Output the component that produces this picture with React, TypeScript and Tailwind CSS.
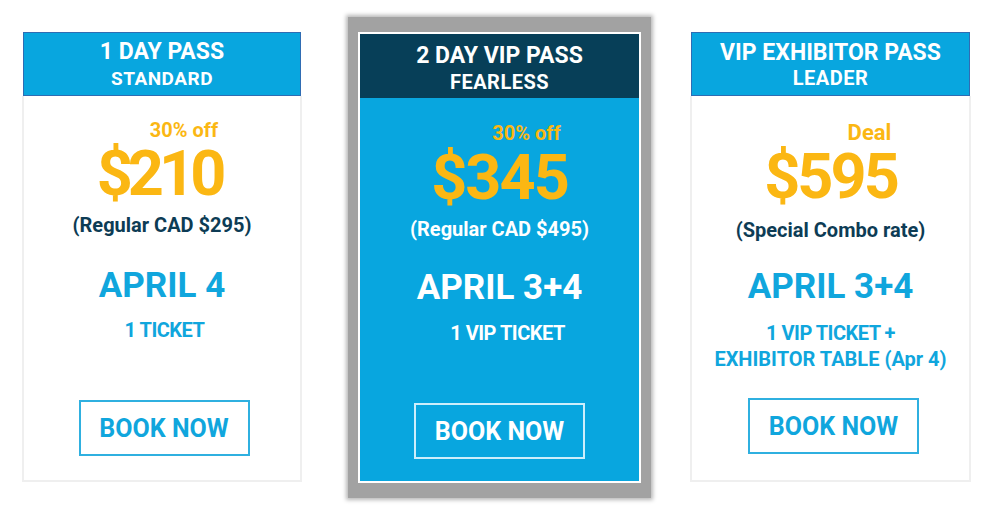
import React from "react";

export default function App() {
  return (
    <div className="w-[1000px] h-[515px] bg-white flex items-start font-['Roboto',sans-serif] font-bold leading-none overflow-hidden">
      {/* Card 1 */}
      <div className="ml-[22px] mt-[32px] w-[280px] flex flex-col">
        <div className="mx-[1px] h-[64px] bg-[#08a6df] border border-[#2f6cb3] flex flex-col items-center justify-center gap-[6px] text-white">
          <div className="text-[23px]">1 DAY PASS</div>
          <div className="text-[19px] tracking-[0.5px]">STANDARD</div>
        </div>
        <div className="h-[386px] border-2 border-t-0 border-[#efefef] flex flex-col items-center">
          <div className="mt-[24px] ml-[44px] text-[20px] text-[#fbb713]">30% off</div>
          <div className="mt-[2px] mr-[6px] text-[63px] text-[#fbb713] tracking-[-5px]">$210</div>
          <div className="mt-[10px] text-[20px] text-[#0d3c55]">(Regular CAD $295)</div>
          <div className="mt-[33px] text-[35px] text-[#10a6dd]">APRIL 4</div>
          <div className="mt-[17px] ml-[5px] text-[20px] tracking-[-0.5px] text-[#10a6dd]">1 TICKET</div>
          <div className="mt-[60px] ml-[4px] w-[171px] h-[56px] border-2 border-[#2fb0e0] flex items-center justify-center text-[25px] text-[#10a6dd]">
            BOOK NOW
          </div>
        </div>
      </div>

      {/* Card 2 (featured) */}
      <div className="ml-[46px] mt-[17px] w-[303px] px-[10px] py-[15px] bg-[#a2a2a2] shadow-[0_0_4px_2px_#b8b8b8]">
        <div className="border-2 border-white flex flex-col">
          <div className="h-[64px] bg-[#073f58] flex flex-col items-center justify-center gap-[5px] text-white pt-[4px]">
            <div className="text-[23px]">2 DAY VIP PASS</div>
            <div className="text-[20px] tracking-[0.5px]">FEARLESS</div>
          </div>
          <div className="h-[383px] bg-[#08a6df] flex flex-col items-center">
            <div className="mt-[25px] ml-[54px] text-[20px] text-[#fbb713]">30% off</div>
            <div className="mt-[3px] text-[63px] text-[#fbb713] tracking-[-2px]">$345</div>
            <div className="mt-[10px] text-[20px] text-white">(Regular CAD $495)</div>
            <div className="mt-[31px] text-[35px] text-white">APRIL 3+4</div>
            <div className="mt-[18px] ml-[16px] text-[20px] tracking-[-0.5px] text-white">1 VIP TICKET</div>
            <div className="mt-[60px] w-[171px] h-[56px] border-2 border-[#cdeefb] flex items-center justify-center text-[25px] text-white">
              BOOK NOW
            </div>
          </div>
        </div>
      </div>

      {/* Card 3 */}
      <div className="ml-[39px] mt-[32px] w-[281px] flex flex-col">
        <div className="mx-[1px] h-[64px] bg-[#08a6df] border border-[#2f6cb3] flex flex-col items-center justify-center gap-[4px] text-white">
          <div className="text-[23px]">VIP EXHIBITOR PASS</div>
          <div className="text-[20px] tracking-[0.5px]">LEADER</div>
        </div>
        <div className="h-[386px] border-2 border-t-0 border-[#efefef] flex flex-col items-center">
          <div className="mt-[26px] ml-[78px] text-[22px] text-[#fbb713]">Deal</div>
          <div className="mt-[1px] text-[63px] text-[#fbb713] tracking-[-3px]">$595</div>
          <div className="mt-[12px] text-[20px] text-[#0d3c55]">(Special Combo rate)</div>
          <div className="mt-[29px] text-[35px] text-[#10a6dd]">APRIL 3+4</div>
          <div className="mt-[19px] text-[20px] tracking-[-0.5px] text-[#10a6dd]">1 VIP TICKET +</div>
          <div className="mt-[6px] text-[20px] text-[#10a6dd]">EXHIBITOR TABLE (Apr 4)</div>
          <div className="mt-[29px] ml-[6px] w-[171px] h-[56px] border-2 border-[#2fb0e0] flex items-center justify-center text-[25px] text-[#10a6dd]">
            BOOK NOW
          </div>
        </div>
      </div>
    </div>
  );
}
